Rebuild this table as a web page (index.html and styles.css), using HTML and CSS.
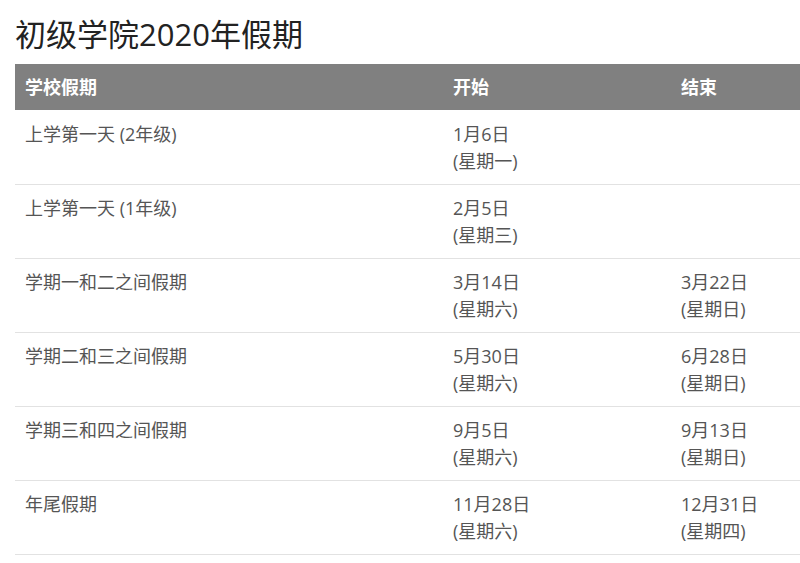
FILE: index.html
```html
<!DOCTYPE html>
<html lang="zh">
<head>
<meta charset="utf-8">
<link rel="stylesheet" href="styles.css">
</head>
<body>
<div class="page">
  <h1 class="title">初级学院2020年假期</h1>
  <table class="holidays">
    <thead>
      <tr><th class="c1">学校假期</th><th class="c2">开始</th><th class="c3">结束</th></tr>
    </thead>
    <tbody>
      <tr><td>上学第一天 (2年级)</td><td>1月6日<br>(星期一)</td><td></td></tr>
      <tr><td>上学第一天 (1年级)</td><td>2月5日<br>(星期三)</td><td></td></tr>
      <tr><td>学期一和二之间假期</td><td>3月14日<br>(星期六)</td><td>3月22日<br>(星期日)</td></tr>
      <tr><td>学期二和三之间假期</td><td>5月30日<br>(星期六)</td><td>6月28日<br>(星期日)</td></tr>
      <tr><td>学期三和四之间假期</td><td>9月5日<br>(星期六)</td><td>9月13日<br>(星期日)</td></tr>
      <tr><td>年尾假期</td><td>11月28日<br>(星期六)</td><td>12月31日<br>(星期四)</td></tr>
    </tbody>
  </table>
</div>
</body>
</html>
```
FILE: styles.css
```css
html, body {
  margin: 0;
  padding: 0;
  background: #fff;
}
body {
  font-family: "Open Sans", "Noto Sans CJK SC", sans-serif;
  overflow: hidden;
}
.page {
  padding: 14px 0 0 15px;
}
.title {
  margin: 0 0 10px 0;
  font-size: 31px;
  line-height: 40px;
  font-weight: 400;
  color: #222;
}
.holidays {
  width: 785px;
  border-collapse: collapse;
  table-layout: fixed;
}
.holidays th {
  background: #808080;
  color: #fff;
  font-weight: 700;
  font-size: 18px;
  line-height: 26px;
  text-align: left;
  padding: 10px 10px;
}
.holidays .c1 { width: 408px; }
.holidays .c2 { width: 208px; }
.holidays tbody tr:first-child td {
  padding-top: 11px;
}
.holidays td {
  font-size: 18px;
  line-height: 27px;
  color: #555;
  padding: 10px 10px 9px;
  vertical-align: top;
  border-bottom: 1px solid #e2e2e2;
  height: 54px;
}
```
